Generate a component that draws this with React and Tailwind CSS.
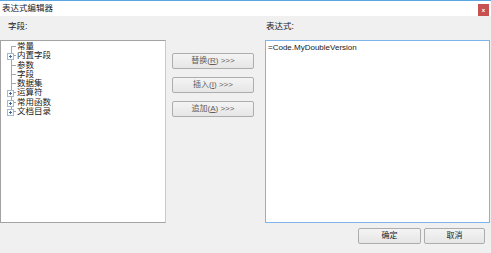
const font = { fontFamily: '"Liberation Sans", "Noto Sans CJK SC", sans-serif' }

const treeItems = [
  { label: '常量', plus: false },
  { label: '内置字段', plus: true },
  { label: '参数', plus: false },
  { label: '字段', plus: false },
  { label: '数据集', plus: false },
  { label: '运算符', plus: true },
  { label: '常用函数', plus: true },
  { label: '文档目录', plus: true },
]

function PlusBox() {
  return (
    <span className="absolute left-[6px] top-[2px] w-[7px] h-[7px] border border-[#a9b8c8] bg-white flex items-center justify-center">
      <span className="absolute w-[3px] h-px bg-[#3a6ea5]" />
      <span className="absolute w-px h-[3px] bg-[#3a6ea5]" />
    </span>
  )
}

function Btn({ children, className = '' }) {
  return (
    <button
      className={`h-[16px] border border-[#adadad] rounded-[2px] bg-gradient-to-b from-[#f4f4f4] to-[#e6e6e6] text-[8px] leading-none flex items-center justify-center ${className}`}
      style={font}
    >
      {children}
    </button>
  )
}

export default function App() {
  return (
    <div className="w-[491px] h-[253px] bg-[#f0f0f0] flex flex-col overflow-hidden text-[#1a1a1a]" style={font}>
      <div className="h-[16px] bg-white border-t border-[#5aa7e6] flex items-center justify-between pl-[2px] pr-[2px] shrink-0">
        <span className="text-[8.5px] leading-none">表达式编辑器</span>
        <span className="w-[11px] h-[12px] bg-[#c75050] flex items-center justify-center mt-[2px]">
          <span className="text-white text-[6px] leading-none font-bold">x</span>
        </span>
      </div>

      <div className="flex pt-[5px]">
        <div className="w-[166px] shrink-0 flex flex-col">
          <div className="h-[19px] pl-[8px] text-[8.5px] leading-[10px]">字段:</div>
          <div className="relative h-[183px] bg-white border border-[#a3a3a3] border-r-[#c9c9c9] pt-[1px]">
            <div className="absolute left-[10px] top-[5px] h-[66px] w-px bg-[#a8a8a8]" />
            {treeItems.map(item => (
              <div key={item.label} className="relative h-[9.3px] pl-[16px] text-[8.5px] leading-[9px]">
                <span className="absolute left-[10px] top-[4px] w-[5px] h-px bg-[#a8a8a8]" />
                {item.plus && <PlusBox />}
                {item.label}
              </div>
            ))}
          </div>
        </div>

        <div className="w-[82px] ml-[6px] shrink-0 flex flex-col gap-[8px] pt-[32px]">
          <Btn className="text-[#5e5e5e]">替换(<u>R</u>) &gt;&gt;&gt;</Btn>
          <Btn className="text-[#5e5e5e]">插入(<u>I</u>) &gt;&gt;&gt;</Btn>
          <Btn className="text-[#5e5e5e]">追加(<u>A</u>) &gt;&gt;&gt;</Btn>
        </div>

        <div className="w-[225px] ml-[11px] shrink-0 flex flex-col">
          <div className="h-[19px] pl-[1px] text-[8.5px] leading-[10px]">表达式:</div>
          <div className="h-[183px] bg-white border border-[#7eb4ea] px-[2px] pt-[2px] text-[8px] leading-[10px]">
            =Code.MyDoubleVersion
          </div>
        </div>
      </div>

      <div className="flex justify-end gap-[3px] pr-[6px] pt-[5px]">
        <Btn className="w-[63px] text-[#1a1a1a]">确定</Btn>
        <Btn className="w-[61px] text-[#1a1a1a]">取消</Btn>
      </div>
    </div>
  )
}
